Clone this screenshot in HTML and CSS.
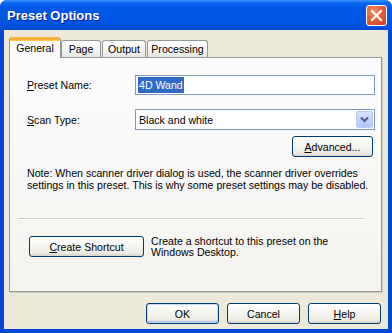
FILE: index.html
```html
<!DOCTYPE html>
<html>
<head>
<meta charset="utf-8">
<link rel="stylesheet" href="styles.css">
</head>
<body>
<div class="window">
  <div class="titlebar">
    <span class="title">Preset Options</span>
    <span class="close"><svg width="13" height="13" viewBox="0 0 13 13"><path d="M2 2L11 11M11 2L2 11" stroke="#fff" stroke-width="2.2" stroke-linecap="square"/></svg></span>
  </div>
  <div class="client">
    <div class="tabs">
      <div class="tab active t-gen">General</div>
      <div class="tab t-page">Page</div>
      <div class="tab t-out">Output</div>
      <div class="tab t-proc">Processing</div>
    </div>
    <div class="panel">
      <div class="field">
        <span class="label"><u>P</u>reset Name:</span>
        <div class="input"><span class="sel">4D Wand</span></div>
      </div>
      <div class="field field2">
        <span class="label"><u>S</u>can Type:</span>
        <div class="select"><span class="seltext">Black and white</span>
          <span class="drop"><svg width="9" height="7" viewBox="0 0 9 7"><path d="M1 1.5L4.5 5L8 1.5" stroke="#4D6185" stroke-width="2" fill="none"/></svg></span>
        </div>
      </div>
      <div class="advrow"><button class="btn adv"><u>A</u>dvanced...</button></div>
      <p class="note">Note: When scanner driver dialog is used, the scanner driver overrides settings in this preset. This is why some preset settings may be disabled.</p>
      <div class="sep"></div>
      <div class="shortcut">
        <button class="btn sc"><u>C</u>reate Shortcut</button>
        <p class="sctext">Create a shortcut to this preset on the<br>Windows Desktop.</p>
      </div>
    </div>
    <div class="buttons">
      <button class="btn main default">OK</button>
      <button class="btn main">Cancel</button>
      <button class="btn main"><u>H</u>elp</button>
    </div>
  </div>
</div>
</body>
</html>
```
FILE: styles.css
```css
* { box-sizing: border-box; }
html, body { margin: 0; padding: 0; background: #fff; }
body { font-family: "Liberation Sans", Arial, sans-serif; font-size: 10.6px; color: #000; }
.window {
  width: 392px; height: 333px;
  background: #0846D8;
  border-radius: 7px 7px 0 0;
  display: flex; flex-direction: column;
  overflow: hidden;
}
.titlebar {
  height: 30px; flex: none;
  background: linear-gradient(#3D95FF 0px, #0A66F0 3px, #0058E6 8px, #0055E4 20px, #0050DC 27px, #0046D2 30px);
  display: flex; align-items: center; justify-content: space-between;
  padding: 0 5px 0 7px;
}
.title {
  color: #fff; font-weight: bold; font-size: 13px;
  text-shadow: 1px 1px 0 #0A1E8C;
  margin-top: 1px;
}
.close {
  width: 21px; height: 21px;
  border: 1px solid #fff; border-radius: 3px;
  background: radial-gradient(circle at 35% 30%, #F0906C 0%, #E4603A 45%, #C93F1E 100%);
  display: flex; align-items: center; justify-content: center;
}
.client {
  flex: 1;
  margin: 0 4px 4px 4px;
  background: #ECE9D8;
  padding: 6px 6px 0 5px;
  display: flex; flex-direction: column;
}
.tabs { display: flex; align-items: flex-end; height: 21px; position: relative; z-index: 1; }
.tab {
  height: 17px;
  border: 1px solid #919B9C; border-bottom: none;
  border-radius: 3px 3px 0 0;
  background: linear-gradient(#FFFFFF, #F3F3EF 60%, #E8E8E1);
  display: flex; align-items: center; justify-content: center;
  margin-right: 1px;
}
.tab.active {
  height: 21px;
  margin-bottom: -1px;
  background: #FCFCFE;
  border-top: 3px solid #F7B03B;
  box-shadow: inset 0 1px 0 #FFC83C;
  margin-right: 0;
  padding-bottom: 2px;
}
.t-gen { width: 52px; }
.t-page { width: 40px; }
.t-out { width: 44px; }
.t-proc { width: 61px; }
.panel {
  height: 235px;
  border: 1px solid #919B9C;
  background: linear-gradient(#FCFCFE, #F4F3EE);
  padding: 17px 6px 0 0;
  box-shadow: 1px 1px 0 #D0CEBF;
}
.field { display: flex; align-items: center; padding-left: 17px; }
.field2 { margin-top: 14px; }
.label { width: 108px; }
.input {
  width: 240px; height: 20px;
  border: 1px solid #7F9DB9; background: #fff;
  display: flex; align-items: center; padding-left: 2px;
}
.sel { background: #316AC5; color: #fff; padding: 1px 1px; line-height: 14px; }
.select {
  width: 240px; height: 21px;
  border: 1px solid #7F9DB9; background: #fff;
  display: flex; align-items: center; justify-content: space-between;
  padding: 1px 1px 1px 3px;
}
.seltext { margin-top: 1px; }
.drop {
  width: 17px; height: 17px;
  border: 1px solid #B9CBF3; border-radius: 2px;
  background: linear-gradient(#D8E4FE, #C1D3FB 50%, #B3C7F5);
  display: flex; align-items: center; justify-content: center;
}
.advrow { display: flex; justify-content: flex-end; margin-top: 6px; padding-right: 2px; }
.btn {
  font-family: "Liberation Sans", Arial, sans-serif; font-size: 10.6px; color: #000;
  border: 1px solid #003C74; border-radius: 3px;
  background: linear-gradient(#FFFFFF, #F6F6F2 40%, #ECEBE4 85%, #D6D0C5);
  padding: 0; height: 21px;
  display: flex; align-items: center; justify-content: center;
}
.adv { width: 81px; }
.note { margin: 10px 0 0 17px; line-height: 12px; width: 345px; }
.sep { margin: 27px 10px 0 8px; height: 2px; border-top: 1px solid #D0D0BF; border-bottom: 1px solid #fff; }
.shortcut { display: flex; align-items: flex-start; margin-top: 16px; padding-left: 19px; }
.sc { width: 115px; flex: none; }
.sctext { margin: 0 0 0 7px; line-height: 11px; }
.buttons { display: flex; justify-content: flex-end; gap: 8px; margin-top: 11px; padding-right: 1px; }
.main { width: 73px; }
.default { box-shadow: inset 0 0 0 1px #C4D8F8, inset 0 -1px 0 1px #A6C2F0; }
u { text-decoration: underline; text-underline-offset: 1px; }
```
